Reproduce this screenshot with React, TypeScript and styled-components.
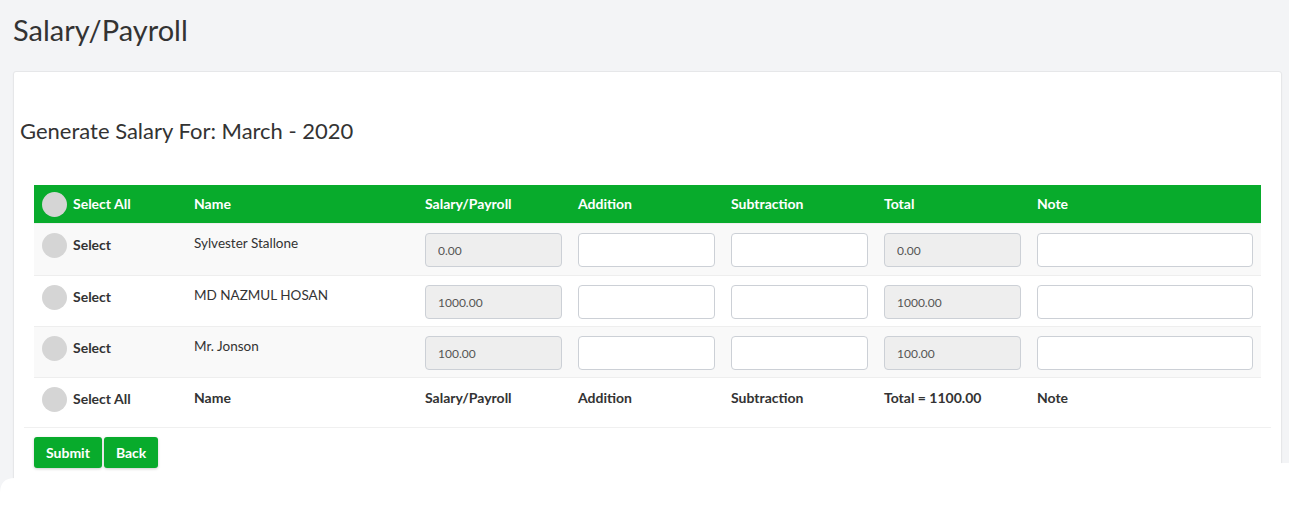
import styled, { createGlobalStyle } from 'styled-components'

const GlobalStyle = createGlobalStyle`
  body {
    margin: 0;
    background: #f3f4f6;
    font-family: Lato, "Liberation Sans", sans-serif;
    color: #333;
  }
`

const Page = styled.div`
  padding: 0 7px 0 13px;
  min-height: 505px;
  box-sizing: border-box;
`

const PageTitle = styled.h1`
  margin: 0;
  padding-top: 13px;
  height: 71px;
  box-sizing: border-box;
  font-size: 29px;
  font-weight: 400;
  line-height: 34px;
  color: #333;
`

const Card = styled.section`
  background: #fff;
  border: 1px solid #e6e7e9;
  border-radius: 3px;
  box-shadow: 0 1px 2px rgba(0, 0, 0, 0.04);
  padding-bottom: 40px;
`

const Heading = styled.h3`
  margin: 44px 0 39px 6px;
  font-size: 22px;
  font-weight: 400;
  line-height: 30px;
  color: #333;
`

const Body = styled.div`
  padding: 0 10px;
`

const TableWrap = styled.div`
  padding: 0 10px;
`

const Table = styled.table`
  width: 100%;
  border-collapse: collapse;
  table-layout: fixed;
  font-size: 13.5px;
`

const HeadRow = styled.tr`
  background: #08ab2c;
  color: #fff;
`

const Th = styled.th<{ $w?: number }>`
  box-sizing: border-box;
  width: ${(p) => (p.$w ? `${p.$w}px` : 'auto')};
  padding: 7px 8px;
  text-align: left;
  font-size: 14px;
  font-weight: 700;
  vertical-align: middle;
  line-height: 20px;
`

const Row = styled.tr<{ $striped?: boolean }>`
  background: ${(p) => (p.$striped ? '#f9f9f9' : '#fff')};
  border-top: 1px solid #eeeeee;
  &:first-child td {
    padding-bottom: 8px;
  }
`

const Td = styled.td`
  padding: 9px 8px 7px;
  vertical-align: top;
  line-height: 20px;
  color: #333;
`

const FootTd = styled.td`
  padding: 9px 8px 16px;
  vertical-align: top;
  line-height: 20px;
  font-size: 14px;
  font-weight: 700;
  color: #333;
`

const FootText = styled.span`
  display: inline-block;
  padding-top: 1px;
`

const Check = styled.label`
  display: flex;
  align-items: center;
  gap: 6px;
  font-size: 14px;
  font-weight: 700;
  height: 24px;
`

const Circle = styled.span`
  width: 25px;
  height: 25px;
  border-radius: 50%;
  background: #d5d5d5;
  flex: none;
`

const Input = styled.input<{ $disabled?: boolean }>`
  display: block;
  width: 100%;
  height: 34px;
  box-sizing: border-box;
  padding: 6px 12px;
  border: 1px solid #ccd0d6;
  border-radius: 4px;
  background: ${(p) => (p.$disabled ? '#eeeeee' : '#fff')};
  font-family: inherit;
  font-size: 12px;
  color: #555;
  outline: none;
`

const Divider = styled.hr`
  margin: 0;
  border: 0;
  border-top: 1px solid #f0f0f0;
`

const Actions = styled.div`
  display: flex;
  gap: 2px;
  padding: 9px 10px 0;
`

const Button = styled.button`
  height: 31px;
  padding: 0 12px;
  border: 0;
  border-radius: 3px;
  background: #08ab2c;
  color: #fff;
  font-family: inherit;
  font-size: 14px;
  font-weight: 700;
  box-shadow: 0 1px 3px rgba(0, 0, 0, 0.2);
  cursor: pointer;
`

const BottomCover = styled.div`
  position: absolute;
  left: 0;
  right: 0;
  top: 463px;
  height: 42px;
  background: #fff;
  clip-path: path('M0 30 Q0 15 15 15 L1289 0 L1289 42 L0 42 Z');
`

const rows = [
  { name: 'Sylvester Stallone', salary: '0.00', total: '0.00' },
  { name: 'MD NAZMUL HOSAN', salary: '1000.00', total: '1000.00' },
  { name: 'Mr. Jonson', salary: '100.00', total: '100.00' },
]

export default function App() {
  return (
    <>
      <GlobalStyle />
      <Page>
        <PageTitle>Salary/Payroll</PageTitle>
        <Card>
          <Heading>Generate Salary For: March - 2020</Heading>
          <Body>
            <TableWrap>
              <Table>
                <thead>
                  <HeadRow>
                    <Th $w={152}>
                      <Check>
                        <Circle />
                        Select All
                      </Check>
                    </Th>
                    <Th $w={231}>Name</Th>
                    <Th $w={153}>Salary/Payroll</Th>
                    <Th $w={153}>Addition</Th>
                    <Th $w={153}>Subtraction</Th>
                    <Th $w={153}>Total</Th>
                    <Th>Note</Th>
                  </HeadRow>
                </thead>
                <tbody>
                  {rows.map((r, i) => (
                    <Row key={r.name} $striped={i % 2 === 0}>
                      <Td>
                        <Check>
                          <Circle />
                          Select
                        </Check>
                      </Td>
                      <Td>{r.name}</Td>
                      <Td>
                        <Input $disabled readOnly value={r.salary} />
                      </Td>
                      <Td>
                        <Input />
                      </Td>
                      <Td>
                        <Input />
                      </Td>
                      <Td>
                        <Input $disabled readOnly value={r.total} />
                      </Td>
                      <Td>
                        <Input />
                      </Td>
                    </Row>
                  ))}
                  <Row>
                    <FootTd>
                      <Check>
                        <Circle />
                        Select All
                      </Check>
                    </FootTd>
                    <FootTd>
                      <FootText>Name</FootText>
                    </FootTd>
                    <FootTd>
                      <FootText>Salary/Payroll</FootText>
                    </FootTd>
                    <FootTd>
                      <FootText>Addition</FootText>
                    </FootTd>
                    <FootTd>
                      <FootText>Subtraction</FootText>
                    </FootTd>
                    <FootTd>
                      <FootText>Total = 1100.00</FootText>
                    </FootTd>
                    <FootTd>
                      <FootText>Note</FootText>
                    </FootTd>
                  </Row>
                </tbody>
              </Table>
            </TableWrap>
            <Divider />
            <Actions>
              <Button>Submit</Button>
              <Button>Back</Button>
            </Actions>
          </Body>
        </Card>
      </Page>
      <BottomCover />
    </>
  )
}
